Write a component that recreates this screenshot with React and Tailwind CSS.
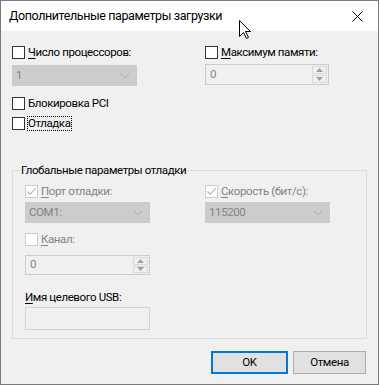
const Box = ({ checked = false, disabled = false }) => (
  <span
    className={`flex h-[13px] w-[13px] shrink-0 items-center justify-center border bg-white ${
      disabled ? "border-[#cccccc]" : "border-[#333333]"
    }`}
  >
    {checked && (
      <svg width="11" height="11" viewBox="0 0 11 11">
        <path
          d="M1.5 5.5 L4.2 8.2 L9.8 2.2"
          fill="none"
          stroke={disabled ? "#b4b4b4" : "#000"}
          strokeWidth="1.1"
        />
      </svg>
    )}
  </span>
);

const CheckRow = ({ children, checked, disabled, className = "" }) => (
  <div className={`flex h-[13px] items-center gap-[3px] ${className}`}>
    <Box checked={checked} disabled={disabled} />
    <span className={`leading-[13px] ${disabled ? "text-[#838383]" : "text-black"}`}>
      {children}
    </span>
  </div>
);

const U = ({ children }) => <span className="underline underline-offset-2">{children}</span>;

const Combo = ({ value, className = "" }) => (
  <div
    className={`flex h-[21px] items-center justify-between border border-[#cccccc] bg-[#cccccc] pl-[3px] pr-[6px] text-[#838383] ${className}`}
  >
    <span>{value}</span>
    <svg width="10" height="6" viewBox="0 0 10 6">
      <path d="M0.5 0.5 L5 5 L9.5 0.5" fill="none" stroke="#b0b0b0" />
    </svg>
  </div>
);

const Spin = ({ value, className = "" }) => (
  <div className={`flex border border-[#cccccc] bg-[#f0f0f0] ${className}`}>
    <span className="flex flex-1 items-center pl-[4px] text-[#838383]">{value}</span>
    <div className="my-[1px] mr-[1px] flex w-[15px] flex-col gap-[1px]">
      <div className="flex flex-1 items-center justify-center border border-[#dadada] bg-[#f0f0f0]">
        <svg width="7" height="4" viewBox="0 0 7 4">
          <path d="M0 4 L3.5 0 L7 4 Z" fill="#a0a0a0" />
        </svg>
      </div>
      <div className="flex flex-1 items-center justify-center border border-[#dadada] bg-[#f0f0f0]">
        <svg width="7" height="4" viewBox="0 0 7 4">
          <path d="M0 0 L3.5 4 L7 0 Z" fill="#a0a0a0" />
        </svg>
      </div>
    </div>
  </div>
);

export default function App() {
  return (
    <div className="relative flex h-[385px] w-[379px] flex-col border border-[#7a7a7a] bg-[#f0f0f0] font-['Segoe_UI','Roboto',sans-serif] text-[11.5px] tracking-[-0.4px] text-black">
      <div className="flex h-[30px] shrink-0 items-center justify-between bg-white pl-[8px] pr-[15px]">
        <span className="text-[12.5px]">Дополнительные параметры загрузки</span>
        <svg width="11" height="11" viewBox="0 0 11 11">
          <path d="M0.5 0.5 L10.5 10.5 M10.5 0.5 L0.5 10.5" stroke="#000" strokeWidth="1" />
        </svg>
      </div>

      <div className="flex flex-col px-[11px]">
        <div className="mt-[15px] flex">
          <div className="flex w-[193px] flex-col">
            <CheckRow>
              <U>Ч</U>исло процессоров:
            </CheckRow>
            <Combo value="1" className="mt-[6px] w-[125px]" />
          </div>
          <div className="flex flex-col">
            <CheckRow>
              <U>М</U>аксимум памяти:
            </CheckRow>
            <Spin value="0" className="mt-[5px] h-[21px] w-[124px]" />
          </div>
        </div>

        <CheckRow className="mt-[11px]">Блокировка PCI</CheckRow>
        <div className="mt-[7px] flex h-[13px] items-center gap-[2px]">
          <Box />
          <span className="border border-dotted border-black leading-[13px]">Отладка</span>
        </div>

        <fieldset className="mt-[32px] w-[355px] border border-[#dcdcdc] pb-[8px] pl-[12px]">
          <legend className="-ml-[5px] px-[1px] leading-[16px]">Глобальные параметры отладки</legend>
          <div className="mt-[7px] flex">
            <div className="flex w-[180px] flex-col">
              <CheckRow checked disabled>
                <U>П</U>орт отладки:
              </CheckRow>
              <Combo value="COM1:" className="mt-[4px] w-[125px]" />
            </div>
            <div className="flex flex-col">
              <CheckRow checked disabled>
                <U>С</U>корость (бит/с):
              </CheckRow>
              <Combo value="115200" className="mt-[4px] w-[125px]" />
            </div>
          </div>
          <CheckRow disabled className="mt-[10px]">
            <U>К</U>анал:
          </CheckRow>
          <Spin value="0" className="mt-[9px] h-[20px] w-[125px]" />
          <div className="mt-[16px] h-[13px] leading-[13px]">
            <U>И</U>мя целевого USB:
          </div>
          <div className="mt-[3px] h-[23px] w-[125px] border border-[#d4d4d4] bg-[#f0f0f0]" />
        </fieldset>

        <div className="mt-[12px] flex justify-end gap-[5px] pr-[1px]">
          <button className="flex h-[23px] w-[77px] items-center justify-center border-2 border-[#0078d7] bg-[#e1e1e1]">
            OK
          </button>
          <button className="flex h-[23px] w-[73px] items-center justify-center border border-[#adadad] bg-[#e1e1e1]">
            Отмена
          </button>
        </div>
      </div>

      <svg
        className="absolute left-[238px] top-[19px]"
        width="13"
        height="20"
        viewBox="0 0 13 20"
      >
        <path
          d="M0.5 0.5 L0.5 16.5 L4.5 12.5 L7.5 18.5 L9.5 17.5 L6.5 11.5 L11.5 11.5 Z"
          fill="#fff"
          stroke="#000"
          strokeWidth="1"
          strokeLinejoin="miter"
        />
      </svg>
    </div>
  );
}
